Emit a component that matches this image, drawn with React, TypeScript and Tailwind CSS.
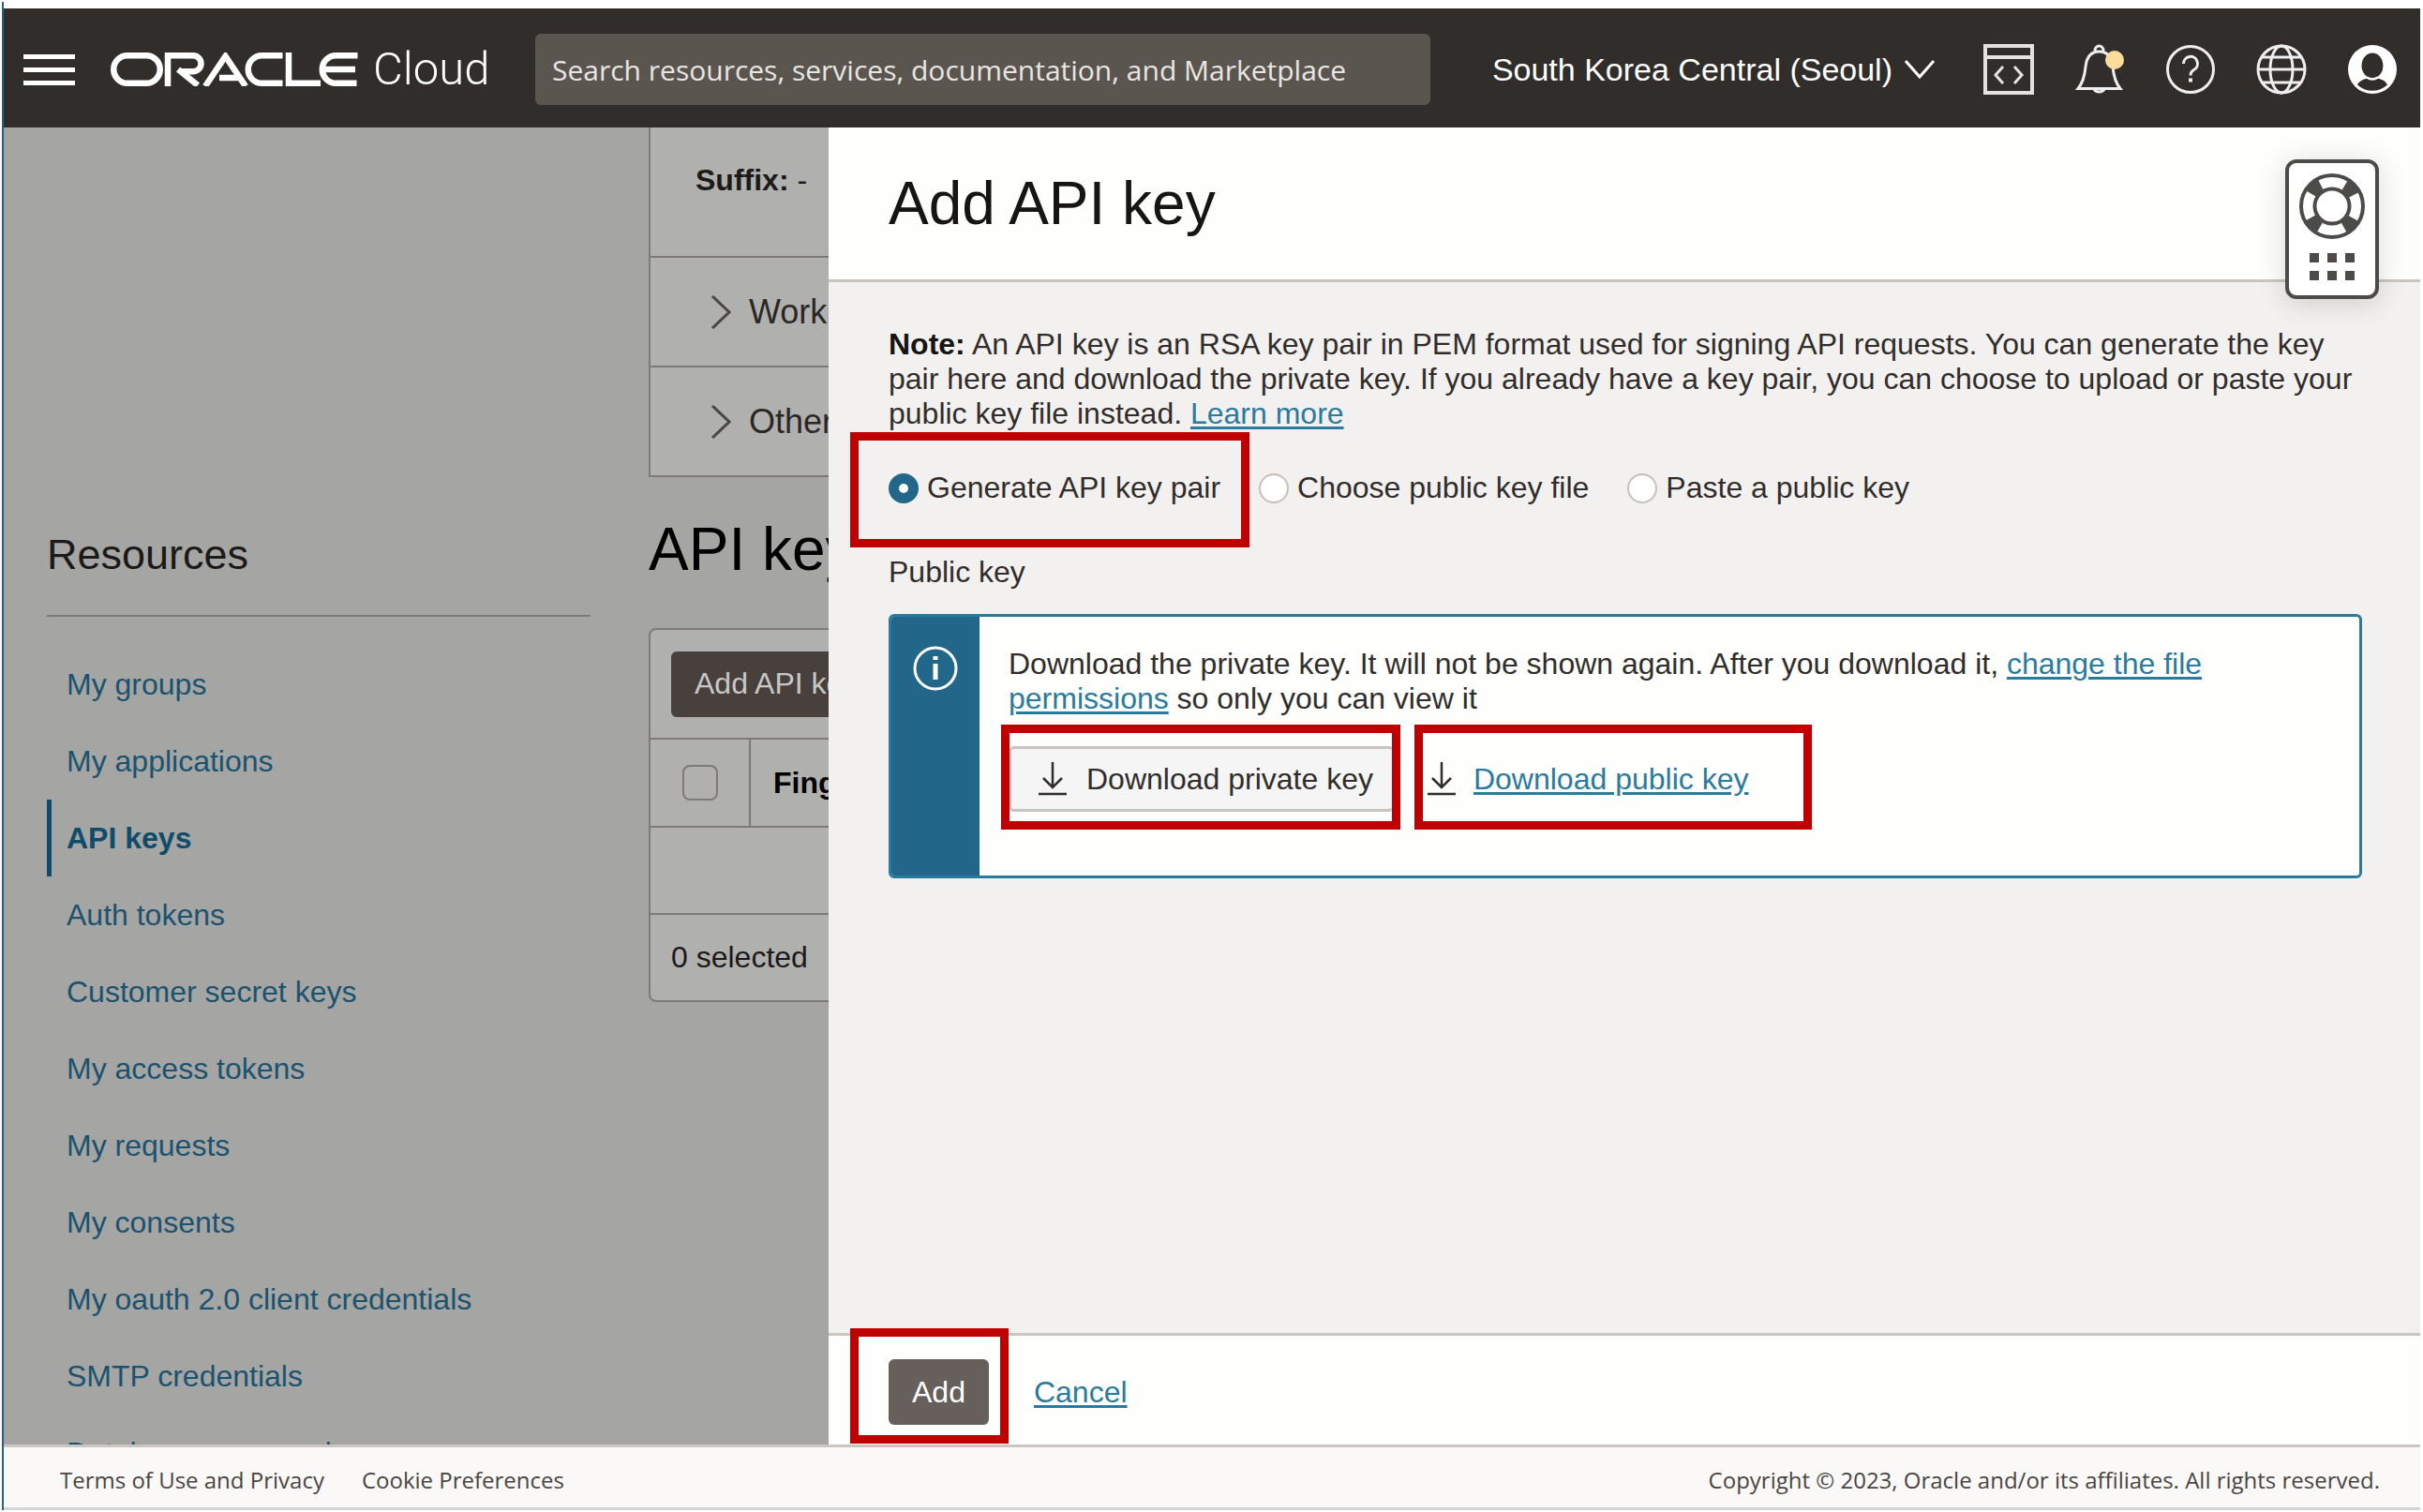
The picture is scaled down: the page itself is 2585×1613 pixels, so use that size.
import React from "react";

const resources = [
  "My groups",
  "My applications",
  "API keys",
  "Auth tokens",
  "Customer secret keys",
  "My access tokens",
  "My requests",
  "My consents",
  "My oauth 2.0 client credentials",
  "SMTP credentials",
  "Database passwords",
];

const keySources = ["Generate API key pair", "Choose public key file", "Paste a public key"];

const linkStyle = "text-[#2a7b9e] underline decoration-[3px] underline-offset-[3px]";

function OracleLogo() {
  return (
    <a href="#home" aria-label="ORACLE Cloud" className="flex items-center gap-4">
      <svg width="264" height="36" viewBox="0 0 264 36" fill="none" stroke="#fff" strokeWidth="6.500">
        <path d="M18 3.250h20a14.750 14.750 0 0 1 0 29.500H18a14.750 14.750 0 0 1 0-29.500z" />
        <path d="M61 36V3.250h27a8.500 8.500 0 0 1 0 17H74M72 18l21 17" />
        <path d="M101 36l21.500-32 21.500 32M116 27h20" />
        <path d="M183.500 3.250h-22a14.750 14.750 0 0 0 0 29.500h22" />
        <path d="M190 0v32.750h34" />
        <path d="M263.500 3.250h-23a14.750 14.750 0 0 0 0 29.500h22M227 18h34" />
      </svg>
      <span className="text-[49px] leading-[56px] font-light text-white font-['Roboto',sans-serif]">Cloud</span>
    </a>
  );
}

function CodeWindowIcon() {
  return (
    <svg width="54" height="54" viewBox="0 0 54 54" fill="none" stroke="#e4e2e0" strokeWidth="4">
      <path d="M2 2h50v50H2zM2 14h50" />
      <path d="M21 24l-8 9 8 9M33 24l8 9-8 9" strokeWidth="3" />
    </svg>
  );
}

function BellIcon() {
  return (
    <svg width="54" height="54" viewBox="0 0 54 54" fill="none" stroke="#eee" strokeWidth="3">
      <path d="M22 7a4.500 5 0 1 1 9 0M4 47.500c5-6 7-13 8-23C13 14 18 8 26.500 8S40 14 41 24.500c1 10 3 17 8 23zM21 48a6 5 0 0 0 11 0" />
      <circle cx="43" cy="17" r="10" fill="#fbdc9a" stroke="none" />
    </svg>
  );
}

function HelpIcon() {
  return (
    <svg width="54" height="54" viewBox="0 0 54 54" fill="none" stroke="#eee" strokeWidth="3">
      <circle cx="27" cy="27" r="24.500" />
      <path d="M19.500 21a7.500 7.500 0 1 1 11 6.500c-2.500 1.500-3.500 3-3.500 6" />
      <path d="M27 36.500v4" strokeWidth="4" />
    </svg>
  );
}

function GlobeIcon() {
  return (
    <svg width="54" height="54" viewBox="0 0 54 54" fill="none" stroke="#eee" strokeWidth="3">
      <circle cx="27" cy="27" r="25" />
      <ellipse cx="27" cy="27" rx="12" ry="25" />
      <path d="M2 27h50M6 14h42M6 41h42" />
    </svg>
  );
}

function UserIcon() {
  return (
    <svg width="54" height="54" viewBox="0 0 54 54">
      <circle cx="27" cy="27" r="26" fill="#fff" />
      <ellipse cx="27" cy="23" rx="11.500" ry="13.500" fill="#312d2a" />
      <path d="M11 43.500c2-4 6-6 11-7h10c5 1 9 3 11 7a23.500 23.500 0 0 1-32 0z" fill="#312d2a" />
      <path d="M21 35.500q6 4 12 0" stroke="#fff" strokeWidth="2.500" fill="none" />
    </svg>
  );
}

function LifebuoyIcon() {
  return (
    <svg width="70" height="70" viewBox="0 0 70 70" fill="none" stroke="#4d4b49">
      <circle cx="35" cy="35" r="26" strokeWidth="14" strokeDasharray="14 26.840" strokeDashoffset="-13.420" />
      <circle cx="35" cy="35" r="33" strokeWidth="4" />
      <circle cx="35" cy="35" r="18.500" strokeWidth="4" />
    </svg>
  );
}

function DownloadIcon() {
  return (
    <svg width="32" height="36" viewBox="0 0 32 36" fill="none" stroke="#312d2a" strokeWidth="2.500" className="shrink-0">
      <path d="M16 0v27M6 17l10 10 10-10M1 34h30" />
    </svg>
  );
}

function Header() {
  return (
    <header className="flex h-[127px] shrink-0 items-center bg-[#312d2a] pt-[3px] pr-6 pl-[21px]">
      <button aria-label="Navigation menu" className="flex w-[55px] shrink-0 flex-col gap-[9px]">
        <span className="h-[5px] w-full bg-white" />
        <span className="h-[5px] w-full bg-white" />
        <span className="h-[5px] w-full bg-white" />
      </button>
      <div className="ml-[38px] w-[453px] shrink-0">
        <OracleLogo />
      </div>
      <input
        aria-label="Search"
        placeholder="Search resources, services, documentation, and Marketplace"
        className="h-[76px] min-w-0 flex-1 rounded-md bg-[#5b554f] px-[18px] text-[30px] text-white placeholder:text-[#e8e6e3] placeholder:opacity-100 font-['Open_Sans',sans-serif]"
      />
      <button className="ml-[66px] flex shrink-0 items-center gap-3 text-[34px] whitespace-nowrap text-white">
        South Korea Central (Seoul)
        <svg width="34" height="22" viewBox="0 0 34 22" fill="none" stroke="#fff" strokeWidth="3">
          <path d="M2 2l15 17L32 2" />
        </svg>
      </button>
      <nav className="ml-[51px] flex shrink-0 items-center gap-[43px]">
        <button aria-label="Developer tools"><CodeWindowIcon /></button>
        <button aria-label="Announcements"><BellIcon /></button>
        <button aria-label="Help"><HelpIcon /></button>
        <button aria-label="Language"><GlobeIcon /></button>
        <button aria-label="Profile"><UserIcon /></button>
      </nav>
    </header>
  );
}

function ResourceMenu() {
  return (
    <aside className="ml-[46px] w-[580px] shrink-0 pt-[437px]">
      <h2 className="border-b-2 border-[#7d7a77] pb-[45px] text-[45px] leading-[38px] text-[#1c1a18]">Resources</h2>
      <ul className="mt-[31px]">
        {resources.map((name) => (
          <li key={name}>
            <a
              href="#resource"
              className={
                name === "API keys"
                  ? "flex h-[82px] items-center border-l-[5px] border-[#0f4c6b] pl-4 font-bold text-[#0f4c6b]"
                  : "flex h-[82px] items-center pl-[21px] text-[#1b536f]"
              }
            >
              {name}
            </a>
          </li>
        ))}
      </ul>
    </aside>
  );
}

function DetailRow({ name }: { name: string }) {
  return (
    <button className="flex h-[117px] w-full items-center gap-[17px] border-b-2 border-[#7d7a77] pl-[64px] text-[36px] text-[#2a2725]">
      <svg width="24" height="38" viewBox="0 0 24 38" fill="none" stroke="#4a4745" strokeWidth="3">
        <path d="M2 2l18 17L2 36" />
      </svg>
      {name}
    </button>
  );
}

function KeyColumn() {
  return (
    <main className="ml-[62px] w-[900px] shrink-0 text-[#1c1a18]">
      <section className="border-l-2 border-[#7d7a77] bg-[#b0b0af]">
        <p className="h-[139px] border-b-2 border-[#7d7a77] pt-[38px] pl-[48px]">
          <b>Suffix:</b> -
        </p>
        <DetailRow name="Work information" />
        <DetailRow name="Other information" />
      </section>
      <h1 className="mt-[41px] text-[64px] leading-[72px] text-black">API keys</h1>
      <section className="mt-[48px] overflow-hidden rounded-lg border-2 border-[#7d7a77] bg-[#b0b0af]">
        <div className="flex h-[115px] items-center pl-[22px]">
          <button className="h-[70px] rounded-md bg-[#47403d] px-[25px] text-[#c9c7c5]">Add API key</button>
        </div>
        <table className="w-full border-y-2 border-[#7d7a77]">
          <thead>
            <tr className="h-[94px] border-b-2 border-[#7d7a77]">
              <th className="w-[106px] border-r-2 border-[#7d7a77]">
                <input
                  type="checkbox"
                  aria-label="Select all keys"
                  className="mx-auto block size-[38px] appearance-none rounded-lg border-2 border-[#7d7a77]"
                />
              </th>
              <th className="pl-6 text-left font-bold text-black">Fingerprint</th>
            </tr>
          </thead>
          <tbody>
            <tr className="h-[93px]">
              <td colSpan={2} />
            </tr>
          </tbody>
        </table>
        <p className="flex h-[91px] items-center pl-[22px]">0 selected</p>
      </section>
    </main>
  );
}

function Highlight({ className, children }: { className: string; children: React.ReactNode }) {
  return (
    <div className="relative">
      {children}
      <div className={"pointer-events-none absolute border-[9px] border-[#c00000] " + className} />
    </div>
  );
}

function KeySource({ name, selected }: { name: string; selected: boolean }) {
  return (
    <label className="flex items-center gap-[9px]">
      <input
        type="radio"
        name="key-source"
        defaultChecked={selected}
        className="size-8 appearance-none rounded-full border-2 border-[#c4c0bc] bg-white checked:border-[11px] checked:border-[#22678a]"
      />
      {name}
    </label>
  );
}

function AddKeyDrawer() {
  return (
    <div role="dialog" aria-label="Add API key" className="absolute inset-y-0 right-0 left-[880px] flex flex-col bg-[#f3f1f0] text-[#312d2a]">
      <div className="flex h-[165px] shrink-0 items-center border-b-[3px] border-[#cbc5bf] bg-[#fefefd] pl-16">
        <h2 className="text-[64px] leading-[72px] text-[#161513]">Add API key</h2>
      </div>
      <div className="flex-1 pt-12 pr-[62px] pl-16">
        <p>
          <b className="text-[#161513]">Note:</b> An API key is an RSA key pair in PEM format used for signing API requests. You can
          generate the key pair here and download the private key. If you already have a key pair, you can choose to upload or paste
          your public key file instead. <a href="#learn" className={linkStyle}>Learn more</a>
        </p>
        <div className="mt-[42px] flex gap-[41px]">
          <Highlight className="-top-[41px] -right-[31px] -bottom-[45px] -left-[41px]">
            <KeySource name={keySources[0]} selected />
          </Highlight>
          <KeySource name={keySources[1]} selected={false} />
          <KeySource name={keySources[2]} selected={false} />
        </div>
        <h3 className="mt-[53px]">Public key</h3>
        <div className="mt-[26px] flex h-[282px] overflow-hidden rounded-md border-[3px] border-[#2a7b9e] bg-[#fefefd]">
          <div className="flex w-[94px] shrink-0 justify-center bg-[#22678a] pt-[31px]">
            <svg width="48" height="48" viewBox="0 0 48 48" fill="none" stroke="#fff" strokeWidth="3">
              <circle cx="24" cy="24" r="22" />
              <path d="M24 19v17M24 11v4" strokeWidth="5" />
            </svg>
          </div>
          <div className="flex-1 pt-8 pl-[31px]">
            <p className="max-w-[1340px]">
              Download the private key. It will not be shown again. After you download it,{" "}
              <a href="#permissions" className={linkStyle}>change the file permissions</a> so only you can view it
            </p>
            <div className="mt-8 flex items-center gap-[34px]">
              <Highlight className="-top-[23px] -right-[6px] -bottom-[19px] -left-[8px]">
                <button className="flex h-[70px] items-center gap-5 rounded-md border-[3px] border-[#c9c4bf] bg-[#f6f5f5] pr-5 pl-7">
                  <DownloadIcon />
                  Download private key
                </button>
              </Highlight>
              <Highlight className="-top-[23px] -right-[68px] -bottom-[19px] -left-[13px]">
                <a href="#public" className="flex h-[70px] items-center gap-[18px]">
                  <DownloadIcon />
                  <span className={linkStyle}>Download public key</span>
                </a>
              </Highlight>
            </div>
          </div>
        </div>
      </div>
      <div className="flex h-[119px] shrink-0 items-center gap-12 border-t-[3px] border-[#cbc5bf] bg-[#fefefd] pt-1 pl-16">
        <Highlight className="-top-[33px] -right-[21px] -bottom-5 -left-[41px]">
          <button className="h-[70px] rounded-md bg-[#665f5b] px-[25px] text-white">Add</button>
        </Highlight>
        <a href="#cancel" className={linkStyle}>Cancel</a>
      </div>
      <button aria-label="Support" className="absolute top-[34px] right-[44px] flex h-[149px] w-[100px] flex-col items-center rounded-xl border-4 border-[#4d4b49] bg-white pt-[11px] shadow-[0_4px_30px_rgba(0,0,0,0.15)]">
        <LifebuoyIcon />
        <span className="mt-[15px] grid grid-cols-3 gap-[9px]">
          {[0, 1, 2, 3, 4, 5].map((n) => (
            <span key={n} className="size-[10px] bg-[#4d4b49]" />
          ))}
        </span>
      </button>
    </div>
  );
}

export default function App() {
  return (
    <div className="flex h-screen flex-col bg-white pt-[2px] pr-[3px] pb-[2px] pl-[2px] text-[32px] leading-[37px] font-['Liberation_Sans',sans-serif]">
      <div className="flex min-h-0 flex-1 flex-col border-l-2 border-[#2a5f7d] pt-[7px]">
        <Header />
        <div className="relative flex min-h-0 flex-1 overflow-hidden bg-[#a5a5a3]">
          <ResourceMenu />
          <KeyColumn />
          <AddKeyDrawer />
        </div>
        <footer className="flex h-[70px] shrink-0 items-center gap-10 border-t-[3px] border-b-[3px] border-t-[#cbc5bf] border-b-[#d3d5d6] bg-[#faf9f8] pt-1 pr-[43px] pl-[60px] text-[24px] text-[#4a4542] font-['Open_Sans',sans-serif]">
          <a href="#terms">Terms of Use and Privacy</a>
          <a href="#cookies">Cookie Preferences</a>
          <p className="ml-auto">Copyright © 2023, Oracle and/or its affiliates. All rights reserved.</p>
        </footer>
      </div>
    </div>
  );
}
